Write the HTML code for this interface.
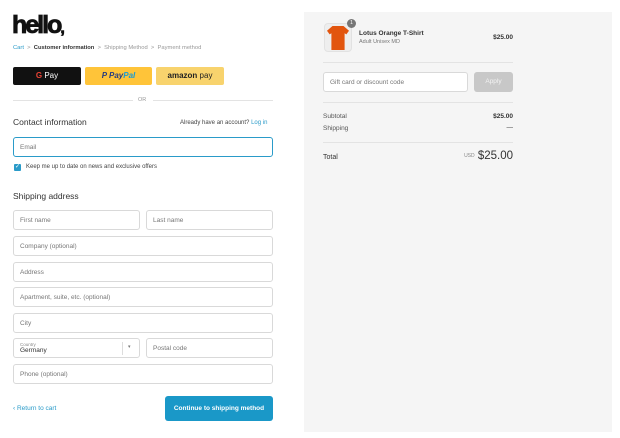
<!DOCTYPE html>
<html><head><style>
*{box-sizing:border-box;margin:0;padding:0}
body{width:620px;height:438px;background:#fff;font-family:"Liberation Sans",sans-serif;position:relative;overflow:hidden;color:#333}
.a{position:absolute}
.f{position:absolute;border:1px solid #d9d9d9;border-radius:3px;background:#fff;font-size:6.5px;color:#777;padding-left:6px;display:flex;align-items:center;height:20px}
.t{font-size:6px;color:#555}
.hr{position:absolute;height:1px;background:#e3e3e3}
</style></head><body>
<div class="a" style="left:12px;top:11px;font-size:25px;font-weight:bold;letter-spacing:-2px;color:#111;line-height:28px;-webkit-text-stroke:0.8px #111">hello<span style="font-size:16px">,</span></div>
<div class="a t" style="left:13px;top:45px;font-size:5.8px;color:#999"><span style="color:#2a9bc9">Cart</span> &nbsp;&gt;&nbsp; <b style="color:#333">Customer information</b> &nbsp;&gt;&nbsp; Shipping Method &nbsp;&gt;&nbsp; Payment method</div>
<div class="a" style="left:13px;top:67px;width:68px;height:18px;background:#111;border-radius:2px;color:#fff;font-size:8px;text-align:center;line-height:18px"><span style="color:#ea4335;font-weight:bold">G</span> Pay</div>
<div class="a" style="left:85px;top:67px;width:67px;height:18px;background:#ffc439;border-radius:2px;font-size:8px;text-align:center;line-height:18px;font-weight:bold;font-style:italic;color:#253b80">P Pay<span style="color:#179bd7">Pal</span></div>
<div class="a" style="left:156px;top:67px;width:68px;height:18px;background:#f8d36d;border-radius:2px;font-size:8px;text-align:center;line-height:18px;color:#222"><b>amazon</b> pay</div>
<div class="hr" style="left:13px;top:100px;width:120px"></div>
<div class="hr" style="left:153px;top:100px;width:120px"></div>
<div class="a" style="left:138px;top:97px;font-size:5.5px;color:#999">OR</div>
<div class="a" style="left:13px;top:117px;font-size:8.5px;color:#333">Contact information</div>
<div class="a" style="left:180px;top:120px;font-size:6px;color:#444">Already have an account? <span style="color:#2a9bc9">Log in</span></div>
<div class="f" style="left:13px;top:137px;width:260px;border:1px solid #2a9bc9">Email</div>
<div class="a" style="left:14px;top:164px;width:7px;height:7px;background:#2a9bc9;border-radius:1px;color:#fff;font-size:6px;line-height:7px;text-align:center">✓</div>
<div class="a" style="left:26px;top:164px;font-size:6px;color:#444">Keep me up to date on news and exclusive offers</div>
<div class="a" style="left:13px;top:191px;font-size:8.5px;color:#333">Shipping address</div>
<div class="f" style="left:13px;top:210px;width:127px">First name</div>
<div class="f" style="left:146px;top:210px;width:127px">Last name</div>
<div class="f" style="left:13px;top:236px;width:260px">Company (optional)</div>
<div class="f" style="left:13px;top:262px;width:260px">Address</div>
<div class="f" style="left:13px;top:287px;width:260px">Apartment, suite, etc. (optional)</div>
<div class="f" style="left:13px;top:313px;width:260px">City</div>
<div class="f" style="left:13px;top:338px;width:127px;display:block;padding-top:3px"><div style="font-size:4.5px;color:#888">Country</div><div style="color:#333;font-size:6.5px">Germany</div>
<div class="a" style="left:108px;top:3px;width:1px;height:13px;background:#ddd"></div><div class="a" style="left:114px;top:5px;font-size:5px;color:#777">▾</div></div>
<div class="f" style="left:146px;top:338px;width:127px">Postal code</div>
<div class="f" style="left:13px;top:364px;width:260px">Phone (optional)</div>
<div class="a" style="left:13px;top:405px;font-size:6.5px;color:#2a9bc9">‹ Return to cart</div>
<div class="a" style="left:165px;top:396px;width:108px;height:25px;background:#1a98c8;border-radius:3px;color:#fff;font-size:6.5px;text-align:center;line-height:25px;font-weight:bold">Continue to shipping method</div>

<div class="a" style="left:304px;top:12px;width:308px;height:420px;background:#f5f5f5"></div>
<div class="a" style="left:324px;top:23px;width:28px;height:29px;background:#eee;border:1px solid #e2e2e2;border-radius:4px"></div>
<div class="a" style="left:327px;top:26px;width:22px;height:24px;background:#e2550e;clip-path:polygon(25% 0,75% 0,100% 20%,88% 35%,80% 30%,80% 100%,20% 100%,20% 30%,12% 35%,0 20%)"></div>
<div class="a" style="left:347px;top:19px;width:9px;height:9px;border-radius:50%;background:#777;color:#fff;font-size:5px;text-align:center;line-height:9px">1</div>
<div class="a" style="left:359px;top:30px;font-size:6.5px;font-weight:bold;color:#333">Lotus Orange T-Shirt</div>
<div class="a" style="left:359px;top:39px;font-size:5.5px;color:#777">Adult Unisex MD</div>
<div class="a" style="right:107px;top:34px;font-size:6.5px;font-weight:bold;color:#333">$25.00</div>
<div class="hr" style="left:323px;top:62px;width:190px"></div>
<div class="f" style="left:323px;top:72px;width:145px;height:20px">Gift card or discount code</div>
<div class="a" style="left:474px;top:72px;width:39px;height:20px;background:#c8c8c8;border-radius:3px;color:#f3f3f3;font-size:6.5px;text-align:center;line-height:20px">Apply</div>
<div class="hr" style="left:323px;top:102px;width:190px"></div>
<div class="a" style="left:323px;top:113px;font-size:6.5px;color:#555">Subtotal</div>
<div class="a" style="right:107px;top:113px;font-size:6.5px;font-weight:bold;color:#333">$25.00</div>
<div class="a" style="left:323px;top:125px;font-size:6.5px;color:#555">Shipping</div>
<div class="a" style="right:107px;top:124px;font-size:6.5px;color:#333">—</div>
<div class="hr" style="left:323px;top:142px;width:190px"></div>
<div class="a" style="left:323px;top:154px;font-size:7px;color:#333">Total</div>
<div class="a" style="right:107px;top:150px;font-size:11.5px;color:#333"><span style="font-size:5px;color:#888;vertical-align:2px">USD</span> $25.00</div>
</body></html>
